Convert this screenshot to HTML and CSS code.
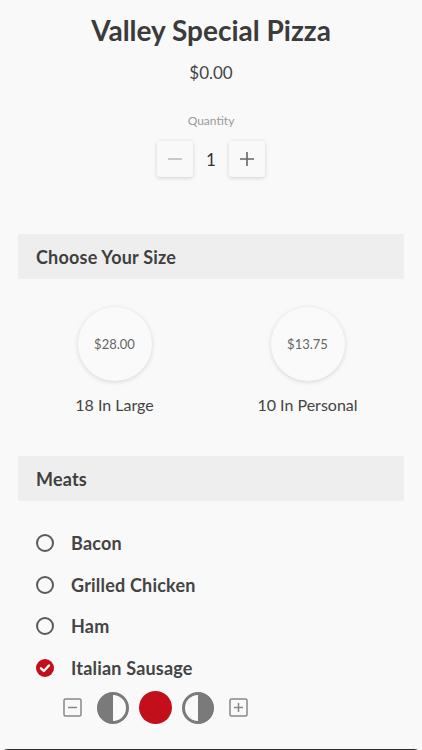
FILE: index.html
```html
<html>
<head>
    <meta charset="utf-8">
    <link rel="stylesheet" href="styles.css">
</head>
<body>
    <div class="page">
        <h1 class="title">Valley Special Pizza</h1>
        <div class="price">$0.00</div>
        <div class="qty-label">Quantity</div>
        <div class="stepper">
            <button class="step minus">
                <svg width="16" height="16" viewBox="0 0 16 16"><path d="M1 8H15" stroke="#bdbdbd" stroke-width="1.6"/></svg>
            </button>
            <span class="qty">1</span>
            <button class="step plus">
                <svg width="16" height="16" viewBox="0 0 16 16"><path d="M1 8H15M8 1V15" stroke="#666" stroke-width="1.6"/></svg>
            </button>
        </div>

        <div class="section">Choose Your Size</div>
        <div class="sizes">
            <div class="size">
                <div class="bubble">$28.00</div>
                <div class="size-name">18 In Large</div>
            </div>
            <div class="size">
                <div class="bubble">$13.75</div>
                <div class="size-name">10 In Personal</div>
            </div>
        </div>

        <div class="section meats">Meats</div>
        <ul class="options">
            <li class="option"><span class="radio"></span>Bacon</li>
            <li class="option"><span class="radio"></span>Grilled Chicken</li>
            <li class="option"><span class="radio"></span>Ham</li>
            <li class="option">
                <span class="radio checked">
                    <svg width="18" height="18" viewBox="0 0 18 18"><path d="M5 9.3L7.8 12L13 6.5" fill="none" stroke="#fff" stroke-width="2.4" stroke-linecap="round" stroke-linejoin="round"/></svg>
                </span>Italian Sausage
            </li>
        </ul>
        <div class="placement">
            <span class="box">
                <svg width="19" height="19" viewBox="0 0 19 19"><rect x="1" y="1" width="17" height="17" rx="1.5" fill="none" stroke="#888" stroke-width="1.5"/><path d="M5 9.5H14" stroke="#888" stroke-width="1.5"/></svg>
            </span>
            <span class="half">
                <svg width="32" height="32" viewBox="0 0 32 32"><circle cx="16" cy="16" r="14.5" fill="#fafafa" stroke="#7a7a7a" stroke-width="3"/><path d="M16 0.5A15.5 15.5 0 0 0 16 31.5Z" fill="#7a7a7a"/></svg>
            </span>
            <span class="whole"></span>
            <span class="half">
                <svg width="32" height="32" viewBox="0 0 32 32"><circle cx="16" cy="16" r="14.5" fill="#fafafa" stroke="#7a7a7a" stroke-width="3"/><path d="M16 0.5A15.5 15.5 0 0 1 16 31.5Z" fill="#7a7a7a"/></svg>
            </span>
            <span class="box">
                <svg width="19" height="19" viewBox="0 0 19 19"><rect x="1" y="1" width="17" height="17" rx="1.5" fill="none" stroke="#888" stroke-width="1.5"/><path d="M5 9.5H14M9.5 5V14" stroke="#888" stroke-width="1.5"/></svg>
            </span>
        </div>
    </div>
    <div class="bottom-bar"></div>
</body>
</html>
```
FILE: styles.css
```css
body{
    margin: 0;
    background: #f9f9f9;
    font-family: "Lato", "Open Sans", sans-serif;
    color: #444;
    overflow: hidden;
}

.page{
    padding: 0 18px;
}

.title{
    margin: 0;
    padding-top: 13px;
    font-size: 28px;
    line-height: 34px;
    font-weight: 700;
    color: #3b3b3b;
    text-align: center;
}

.price{
    margin-top: 15px;
    font-size: 17px;
    line-height: 22px;
    text-align: center;
    color: #444;
}

.qty-label{
    margin-top: 29px;
    font-size: 12px;
    line-height: 16px;
    text-align: center;
    color: #9a9a9a;
}

.stepper{
    margin-top: 12px;
    display: flex;
    justify-content: center;
    align-items: center;
}

.step{
    width: 36px;
    height: 36px;
    padding: 0;
    border: none;
    border-radius: 3px;
    background: #f9f9f9;
    box-shadow: 0 1px 4px rgba(0, 0, 0, 0.16);
    display: flex;
    align-items: center;
    justify-content: center;
}

.qty{
    width: 36px;
    text-align: center;
    font-size: 17px;
    color: #333;
}

.section{
    margin-top: 57px;
    height: 45px;
    padding-left: 18px;
    display: flex;
    align-items: center;
    background: #eeeeee;
    border-radius: 2px;
    font-size: 18px;
    font-weight: 700;
    letter-spacing: 0.2px;
    color: #3f3f3f;
}

.sizes{
    margin-top: 28px;
    display: grid;
    grid-template-columns: 1fr 1fr;
}

.size{
    display: flex;
    flex-direction: column;
    align-items: center;
}

.bubble{
    width: 74px;
    height: 74px;
    border-radius: 50%;
    background: #fafafa;
    box-shadow: 0 1px 5px rgba(0, 0, 0, 0.14);
    display: flex;
    align-items: center;
    justify-content: center;
    font-size: 13px;
    color: #666;
}

.size-name{
    margin-top: 14px;
    font-size: 16px;
    line-height: 20px;
    color: #444;
}

.meats{
    margin-top: 41px;
}

.options{
    list-style: none;
    margin: 21px 0 0;
    padding: 0 0 0 18px;
}

.option{
    height: 41.7px;
    display: flex;
    align-items: center;
    gap: 17px;
    font-size: 18px;
    font-weight: 700;
    letter-spacing: 0.2px;
    color: #444;
}

.radio{
    width: 18px;
    height: 18px;
    box-sizing: border-box;
    border: 2px solid #5a5a5a;
    border-radius: 50%;
    display: flex;
}

.radio.checked{
    border: none;
    background: #c20f1b;
}

.placement{
    margin-top: 2px;
    height: 34px;
    padding-left: 45px;
    display: flex;
    align-items: center;
}

.box{
    display: flex;
}

.half{
    display: flex;
    margin: 0 5px;
}

.box:first-child{
    margin-right: 10px;
}

.box:last-child{
    margin-left: 10px;
}

.whole{
    width: 33px;
    height: 33px;
    border-radius: 50%;
    background: #c20f1b;
    margin: 0 5px;
}

.bottom-bar{
    margin-top: 24px;
    height: 20px;
    background: #2a2a2a;
    border-radius: 8px 8px 0 0;
}
```
